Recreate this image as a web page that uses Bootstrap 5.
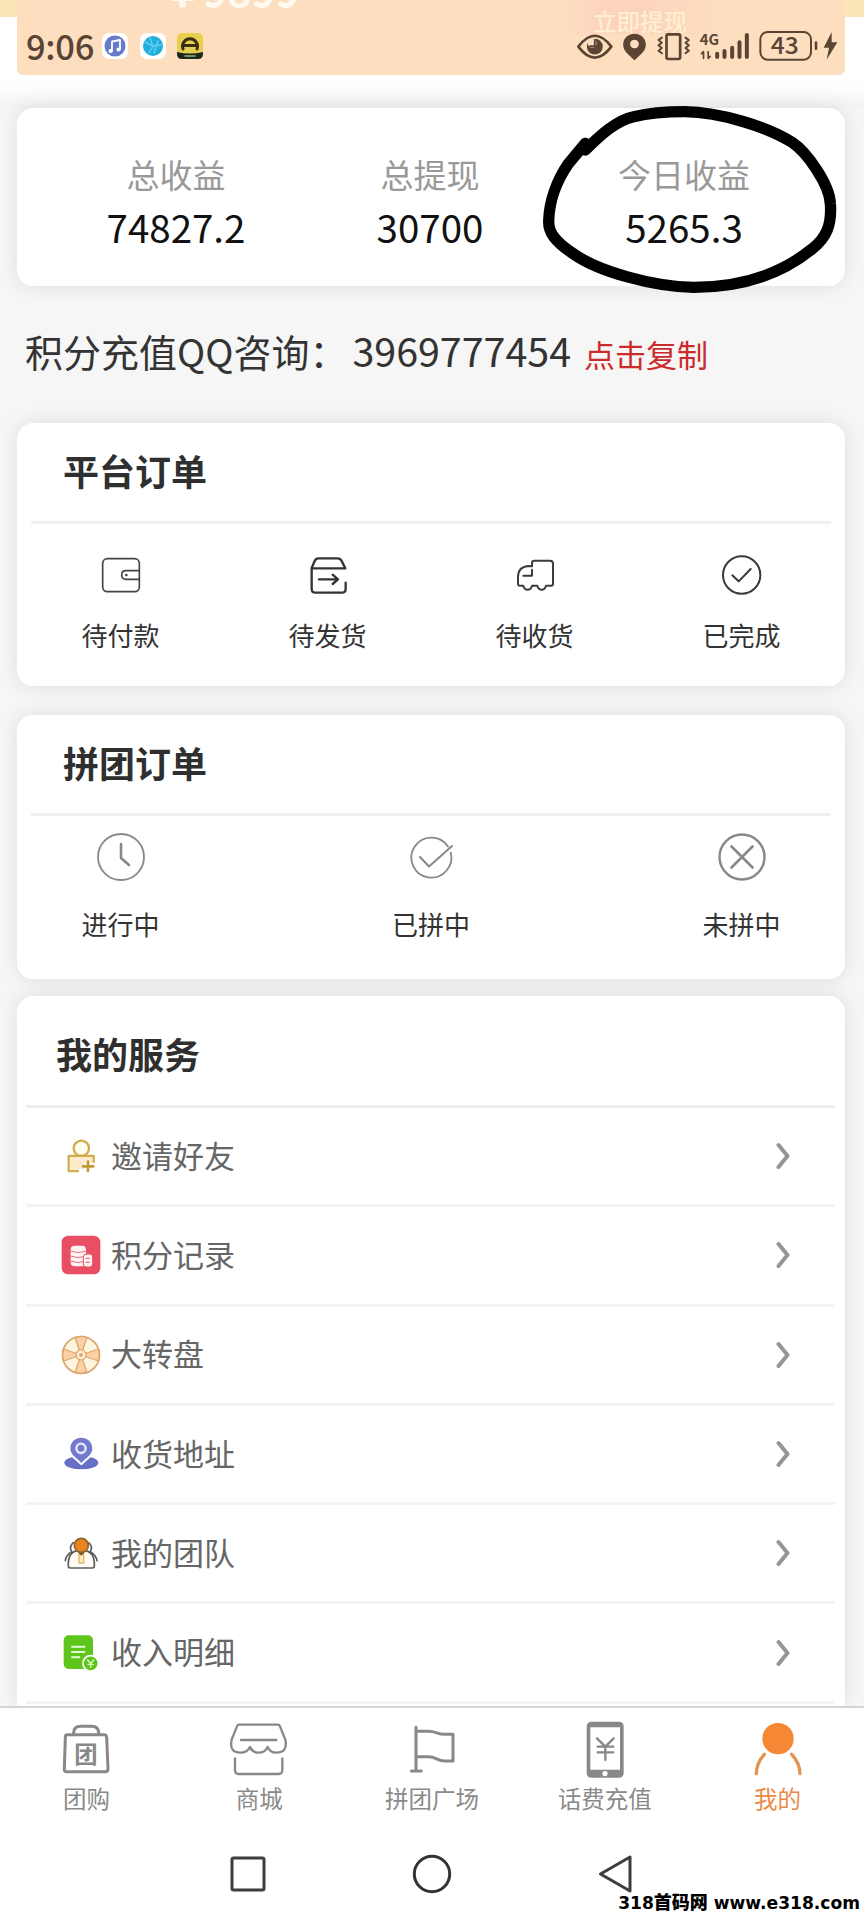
<!DOCTYPE html>
<html lang="zh-CN">
<head>
<meta charset="utf-8">
<meta name="viewport" content="width=device-width, initial-scale=1">
<title>我的</title>
<link href="https://cdn.jsdelivr.net/npm/bootstrap@5.3.0/dist/css/bootstrap.min.css" rel="stylesheet">
<style>
body{font-family:"Noto Sans CJK SC",sans-serif;background:#f6f6f6;color:#333;line-height:1}
.screen{width:864px;height:1920px}
svg{display:block;flex:none;fill:none;stroke-linecap:round;stroke-linejoin:round}
.hero{height:108px;background:linear-gradient(#fae6b9 0 17px,#fff 17px 84px,#f3f3f3 108px);padding:0 19px 0 17px}
.banner{height:75px;background:linear-gradient(90deg,transparent 540px,#fcd3bd 590px 620px,transparent 720px) 0 0/100% 34px no-repeat,#fddfc0;border-radius:0 0 6px 6px}
.balance{left:145px;top:-33px;font-size:41px;line-height:44px;color:#fffaf0;font-weight:700}
.withdraw{left:576px;top:9px;font-size:23.5px;line-height:24px;color:#fff1cf;font-weight:500}
.status{padding:29px 7px 0 9px;color:#5a4434}
.clock{font-size:34.5px;line-height:34px;font-weight:500;width:67px;margin-right:9px;letter-spacing:-.3px;position:relative;margin-top:-2px}
.panel{background:#fff;border-radius:16px;margin:0 19px 0 17px;box-shadow:0 0 20px rgba(0,0,0,.1)}
.stats{height:178px;padding:48px 22px 0 32px}
.stats .item{width:254px}
.stats .tag{font-size:33px;line-height:36px;color:#999}
.stats .num{font-size:38.5px;line-height:44px;margin-top:12px;color:#111}
.contact{height:137px;padding:41px 0 0 25px;font-size:38px;line-height:46px}
.contact .copy{font-size:31px;color:#cc2b2b;margin-left:13px}
.contact .qq{font-size:39.4px;line-height:46px;margin-left:5px}
h2{font-size:36px;font-weight:700;line-height:40px;margin:0;color:#2f2f2f}
.orders{height:263px;margin-bottom:29px}
.groups{height:264px;margin-bottom:17px}
.headline{height:101px;margin:0 14px;padding:27px 0 0 32px;border-bottom:3px solid #f0f0f0}
.entry{width:25%;font-size:26px;line-height:30px}
.orders .entry{padding-top:28px}
.orders .entry span{margin-top:22px}
.groups .entry{padding-top:15px}
.groups .entry span{margin-top:26px}
.services{height:710px;border-radius:16px 16px 0 0;padding:0 10px 0 9px}
.services h2{height:112px;padding:37px 0 0 30px;border-bottom:3px solid #ededed}
.service{height:99.3px;border-bottom:3px solid #f3f3f3;padding:0 45px 0 35px;font-size:31px;color:#666}
.service span{margin:-3px 0 0 10px;line-height:34px}
.tabs{height:121px;background:#fff;border-top:2px solid #d4d4d4;font-size:23.5px;color:#8a8a8a;position:relative}
.tabs a{width:20%;color:inherit;text-decoration:none;padding-top:11px}
.tabs a.active{color:#eb8a45}
.tabs span{line-height:28px;margin-top:3px}
.keys{height:93px;background:#fff}
.keys svg{margin:26px 0 0}
.site{right:4px;bottom:7px;font:700 17.1px/20px "DejaVu Sans","Noto Sans CJK SC",sans-serif;color:#000;white-space:nowrap}
.site b{font-size:18px}
.scribble{left:432px;top:0}
.t4{font:700 42px "Noto Sans CJK SC",sans-serif}
</style>
</head>
<body>
<div class="screen position-relative overflow-hidden">
  <header class="hero">
    <div class="banner position-relative overflow-hidden">
      <div class="balance position-absolute">￥9899</div>
      <div class="withdraw position-absolute">立即提现</div>
      <div class="status d-flex align-items-center position-relative">
        <div class="clock">9:06</div>
        <div class="d-flex" style="gap:11.5px">
          <svg width="26" height="26" viewBox="0 0 26 26"><rect width="26" height="26" rx="7" fill="#fff"/><circle cx="13" cy="13" r="10.5" fill="#667bc9"/><path d="M10 18V8.500l8-1.500v9" stroke="#fff" stroke-width="1.800"/><circle cx="8.600" cy="18" r="2.100" fill="#fff"/><circle cx="16.500" cy="16.500" r="2.100" fill="#fff"/></svg>
          <svg width="26" height="26" viewBox="0 0 26 26"><rect width="26" height="26" rx="7" fill="#fff"/><circle cx="13" cy="13" r="10" fill="#22addd"/><path d="M5 9l8 4 8-1M9 20l4-7-3-8M14 20l4-12" stroke="#5fd0ee" stroke-width="1.500"/></svg>
          <svg width="26" height="26" viewBox="0 0 26 26"><rect width="26" height="26" rx="5" fill="#e9cf4f"/><path d="M6 16a7.500 7.500 0 1 1 14 0M7.500 12.500h11" stroke="#3a2d10" stroke-width="3"/><path d="M0 19q13 3 26 0v2q0 5-5 5H5q-5 0-5-5z" fill="#1c2a1c"/><path d="M8 23h10" stroke="#9db08c" stroke-width="1.500"/></svg>
        </div>
        <div class="d-flex ms-auto" style="gap:7px">
          <svg width="38" height="34" viewBox="435 88 115 102" stroke="#5a4434" stroke-width="8"><path d="M442 141q50-66 100 0q-50 66-100 0z"/><circle cx="492" cy="141" r="24" fill="#5a4434" stroke="none"/><circle cx="484" cy="131" r="13" fill="#fddfc0" stroke="none"/><path d="M492 124v16h-14" stroke-width="6"/></svg>
          <svg width="27" height="34" viewBox="570 88 80 102"><path fill-rule="evenodd" d="M610 102c-21 0-34 15-34 33 0 20 18 30 34 47 16-17 34-27 34-47 0-18-13-33-34-33zM610 120a13 13 0 1 1-.1 0z" fill="#5a4434"/></svg>
          <svg width="37" height="34" viewBox="668 88 110 102" stroke="#5a4434" stroke-width="8"><rect x="702" y="104" width="41" height="74" rx="5"/><path stroke-width="6" d="M688 114l-10 7 10 8-10 8 10 8-10 8 10 8M759 114l10 7-10 8 10 8-10 8 10 8-10 8"/></svg>
          <svg width="52" height="34" viewBox="800 88 155 102" stroke="#5a4434"><text class="t4" x="802" y="137" font-size="42" textLength="58" lengthAdjust="spacingAndGlyphs" fill="#5a4434" stroke="none">4G</text><path d="M813 176v-20l-6 6M827 156v20l6-6" stroke-width="5"/><path d="M854 162v10M876 154v18M899 144v28M921 128v44M943 106v66" stroke-width="12"/></svg>
          <svg width="80" height="34" viewBox="975 88 240 102"><rect x="982" y="97" width="152" height="83" rx="22" stroke="#5a4434" stroke-width="6"/><text x="1013" y="164" font-size="70" font-weight="500" textLength="84" lengthAdjust="spacingAndGlyphs" fill="#5a4434">43</text><path d="M1149 129v18" stroke="#5a4434" stroke-width="8"/><path d="M1196 97l-24 47h16l-7 36 32-52h-17z" fill="#5a4434"/></svg>
        </div>
      </div>
    </div>
  </header>

  <section class="panel stats d-flex text-center">
    <div class="item"><div class="tag">总收益</div><div class="num">74827.2</div></div>
    <div class="item"><div class="tag">总提现</div><div class="num">30700</div></div>
    <div class="item"><div class="tag">今日收益</div><div class="num">5265.3</div></div>
  </section>
  <svg class="scribble position-absolute" width="432" height="300" viewBox="0 0 1296 900" stroke="#000" stroke-width="34"><path d="M460 430V450C510 400 555 361 605 350C650 339 700 335 758 335C865 336 1010 382 1080 427C1125 457 1192 552 1195 610C1200 675 1183 714 1140 747C1050 820 930 862 785 862C660 860 500 814 425 762C365 722 350 695 350 665C351 600 378 536 410 490L460 430"/></svg>

  <div class="contact d-flex align-items-baseline">积分充值QQ咨询：<span class="qq">3969777454</span><span class="copy">点击复制</span></div>

  <section class="panel orders">
    <div class="headline"><h2>平台订单</h2></div>
    <div class="d-flex">
      <div class="entry d-flex flex-column align-items-center"><svg width="46" height="46" viewBox="291 64 138 138" stroke="#444" stroke-width="5"><rect x="305" y="84" width="110" height="99" rx="14"/><path d="M415 120h-40q-13 0-13 13t13 13h40"/><circle cx="376" cy="133" r="4" fill="#444" stroke="none"/></svg><span>待付款</span></div>
      <div class="entry d-flex flex-column align-items-center"><svg width="46" height="46" viewBox="914 64 138 138" stroke="#333" stroke-width="7"><path d="M1036 156v18q0 12-12 12h-78q-12 0-12-12v-62l9-21q3-8 12-8h56q9 0 13 8l11 22H935M956 146h56M997 132l16 14-16 14"/></svg><span>待发货</span></div>
      <div class="entry d-flex flex-column align-items-center"><svg width="46" height="46" viewBox="238 64 138 138" stroke="#3c3c3c" stroke-width="6"><path d="M298 107V97q0-7 7-7h47q9 0 9 9v60q0 6-6 6h-15q-3 12-13 12t-13-12h-16q-3 12-13 12t-13-12h-10q-6 0-6-6v-20q0-30 30-33zM298 117v18h-26"/></svg><span>待收货</span></div>
      <div class="entry d-flex flex-column align-items-center"><svg width="46" height="46" viewBox="861 64 138 138" stroke="#3a3a3a" stroke-width="6"><circle cx="929" cy="133" r="56"/><path d="M901 134l19 18 36-37"/></svg><span>已完成</span></div>
    </div>
  </section>

  <section class="panel groups">
    <div class="headline"><h2>拼团订单</h2></div>
    <div class="d-flex justify-content-between">
      <div class="entry d-flex flex-column align-items-center"><svg width="52" height="52" viewBox="94 831 52 52" stroke="#888" stroke-width="1.800"><circle cx="120" cy="857" r="23"/><path d="M120 844v14l8 7" stroke-width="2.600"/></svg><span>进行中</span></div>
      <div class="entry d-flex flex-column align-items-center"><svg width="52" height="52" viewBox="405 831 52 52" stroke="#888" stroke-width="1.800"><path d="M448 846.500a20 20 0 1 0 2.700 6"/><path d="M420 857l9 9.500L452 846" stroke-width="2"/></svg><span>已拼中</span></div>
      <div class="entry d-flex flex-column align-items-center"><svg width="52" height="52" viewBox="716 831 52 52" stroke="#888" stroke-width="2.400"><circle cx="742" cy="857" r="22.500"/><path d="M731.500 846.500l21 21M752.500 846.500l-21 21" stroke-width="2.600"/></svg><span>未拼中</span></div>
    </div>
  </section>

  <section class="panel services">
    <h2>我的服务</h2>
    <div class="service d-flex align-items-center"><svg width="40" height="40" viewBox="185 440 120 120" stroke="#cfac4c" stroke-width="7"><circle cx="246" cy="477" r="23" fill="#fffbed"/><path d="M208 500h75v18M208 500v45h28" stroke="#d3ae50"/><path d="M213 505h65v15h-24v20h-41z" fill="#fdeccb" stroke="none"/><path d="M251 531h31M266 517v28" stroke="#c09b34" stroke-width="8"/></svg><span>邀请好友</span><svg class="ms-auto" width="14" height="28" viewBox="0 0 14 28"><path d="M2.500 3L11.500 14l-9 11" stroke="#959595" stroke-width="4"/></svg></div>
    <div class="service d-flex align-items-center"><svg width="40" height="40" viewBox="185 736 120 120"><rect x="187" y="738" width="116" height="116" rx="20" fill="#ea4e64"/><rect x="214" y="768" width="46" height="62" rx="12" fill="#fff2f2"/><path d="M216 785q20 8 42 0M216 800q20 8 42 0M216 815q20 8 42 0" stroke="#eb7180" stroke-width="3"/><rect x="252" y="793" width="28" height="39" rx="9" fill="#fff2f2" stroke="#ea4e64" stroke-width="3"/><path d="M260 806h10M260 818h10" stroke="#eb7180" stroke-width="4"/></svg><span>积分记录</span><svg class="ms-auto" width="14" height="28" viewBox="0 0 14 28"><path d="M2.500 3L11.500 14l-9 11" stroke="#959595" stroke-width="4"/></svg></div>
    <div class="service d-flex align-items-center"><svg width="40" height="40" viewBox="-20 -20 40 40" stroke="#dda66d" stroke-width="1.200"><circle r="18.500" fill="#fff4df"/><path fill="#fbd0a4" d="M0 0L-6-17.500A18.500 18.500 0 0 1 6-17.500zM0 0L17.500-6A18.500 18.500 0 0 1 17.500 6zM0 0L6 17.500A18.500 18.500 0 0 1-6 17.500zM0 0L-17.500 6A18.500 18.500 0 0 1-17.500-6z"/><circle r="18.500" stroke-width="1.600"/><circle r="5" fill="#fff0d4"/><circle r="1.300" fill="#dda66d"/></svg><span>大转盘</span><svg class="ms-auto" width="14" height="28" viewBox="0 0 14 28"><path d="M2.500 3L11.500 14l-9 11" stroke="#959595" stroke-width="4"/></svg></div>
    <div class="service d-flex align-items-center"><svg width="40" height="40" viewBox="185 403 120 120"><ellipse cx="246" cy="489" rx="51" ry="20" fill="#6670c5"/><path d="M246 414c-21 0-33 16-33 32 0 20 18 28 33 44 15-16 33-24 33-44 0-16-12-32-33-32z" fill="#7379cd" stroke="#fff" stroke-width="12" paint-order="stroke"/><circle cx="245" cy="446" r="14" fill="#7379cd" stroke="#e8eaff" stroke-width="7"/></svg><span>收货地址</span><svg class="ms-auto" width="14" height="28" viewBox="0 0 14 28"><path d="M2.500 3L11.500 14l-9 11" stroke="#959595" stroke-width="4"/></svg></div>
    <div class="service d-flex align-items-center"><svg width="40" height="40" viewBox="185 701 120 120" stroke="#5d5d5d" stroke-width="5"><path d="M222 730q-14 12-5 27-18 11-19 27M268 730q14 12 5 27 18 11 20 27"/><path d="M207 801q-2-43 28-47h22q30 4 28 47 0 5-6 5h-66q-6 0-6-5z" fill="#fffdf4"/><path d="M239 763h14v28h-14z" fill="#ffeebd" stroke="#dfb66c" stroke-width="4"/><path d="M235 754l11 12 11-12" stroke="#795522"/><circle cx="246" cy="738" r="21" fill="#ea841d" stroke="#8d6231"/></svg><span>我的团队</span><svg class="ms-auto" width="14" height="28" viewBox="0 0 14 28"><path d="M2.500 3L11.500 14l-9 11" stroke="#959595" stroke-width="4"/></svg></div>
    <div class="service d-flex align-items-center"><svg width="40" height="40" viewBox="185 998 120 120"><rect x="193" y="1005" width="88" height="101" rx="15" fill="#5dc51c"/><path d="M218 1039h37M218 1055h37M218 1071h22" stroke="#e5ffd8" stroke-width="6"/><circle cx="274" cy="1089" r="23" fill="#5dc51c" stroke="#fff" stroke-width="5"/><path d="M265 1079l9 10 9-10M274 1089v12M266 1092h16" stroke="#dfffcd" stroke-width="4"/></svg><span>收入明细</span><svg class="ms-auto" width="14" height="28" viewBox="0 0 14 28"><path d="M2.500 3L11.500 14l-9 11" stroke="#959595" stroke-width="4"/></svg></div>
  </section>

  <nav class="tabs d-flex">
    <a href="#" class="d-flex flex-column align-items-center"><svg width="60" height="62" viewBox="169 58 180 186" stroke="#888" stroke-width="9"><path d="M202 105h112q6 0 7 8l4 95q0 8-8 8H201q-8 0-7-8l3-95q0-8 5-8zM222 101v-3q2-18 20-18h34q19 0 21 18v3"/><text x="224" y="190" font-size="70" font-weight="700" fill="#888" stroke="none">团</text></svg><span>团购</span></a>
    <a href="#" class="d-flex flex-column align-items-center"><svg width="60" height="62" viewBox="688 58 180 186" stroke="#888" stroke-width="7"><path d="M718 75h116q5 0 7 5l16 40q8 39-27 39-19 0-26-17-8 17-27 17t-26-17q-8 17-29 17-34 0-26-39l16-40q2-5 6-5zM724 121h106M706 176v36q0 11 11 11h120q11 0 11-11v-36"/></svg><span>商城</span></a>
    <a href="#" class="d-flex flex-column align-items-center"><svg width="60" height="62" viewBox="1206 58 180 186" stroke="#888" stroke-width="9"><path d="M1248 83v131M1234 214h30M1248 95h37c25 0 25 9 50 9h24v80h-24c-25 0-25-13-50-13h-37"/></svg><span>拼团广场</span></a>
    <a href="#" class="d-flex flex-column align-items-center"><svg width="60" height="62" viewBox="430 58 180 186"><path fill="#888" fill-rule="evenodd" d="M480 66h81q15 0 15 15v138q0 15-15 15h-81q-15 0-15-15V81q0-15 15-15zM476 83v127h89V83zM520 214a8 8 0 1 0 .1 0z"/><path d="M496 116l25 25 25-25M521 141v40M498 141h47M498 158h47" stroke="#888" stroke-width="7"/></svg><span>话费充值</span></a>
    <a href="#" class="active d-flex flex-column align-items-center"><svg width="60" height="62" viewBox="947 58 180 186"><circle cx="1037" cy="117" r="47" fill="#f58735"/><path d="M996 164q-24 27-24 58M1078 164q25 27 25 58" stroke="#e29450" stroke-width="10"/></svg><span>我的</span></a>
  </nav>
  <div class="keys d-flex justify-content-center position-relative">
    <div class="d-flex" style="gap:144px">
      <svg width="40" height="42" viewBox="0 0 40 42" stroke="#3d3d3d" stroke-width="3"><rect x="4" y="5" width="32" height="32" rx="1.500"/></svg>
      <svg width="40" height="42" viewBox="0 0 40 42" stroke="#333" stroke-width="3"><circle cx="20" cy="21" r="17.700"/></svg>
      <svg width="40" height="42" viewBox="0 0 40 42" stroke="#3d3d3d" stroke-width="3"><path d="M4.500 21L34 4v34z"/></svg>
    </div>
    <div class="site position-absolute">318<b>首码网</b> www.e318.com</div>
  </div>
</div>
<script src="https://cdn.jsdelivr.net/npm/bootstrap@5.3.0/dist/js/bootstrap.bundle.min.js"></script>
</body>
</html>
